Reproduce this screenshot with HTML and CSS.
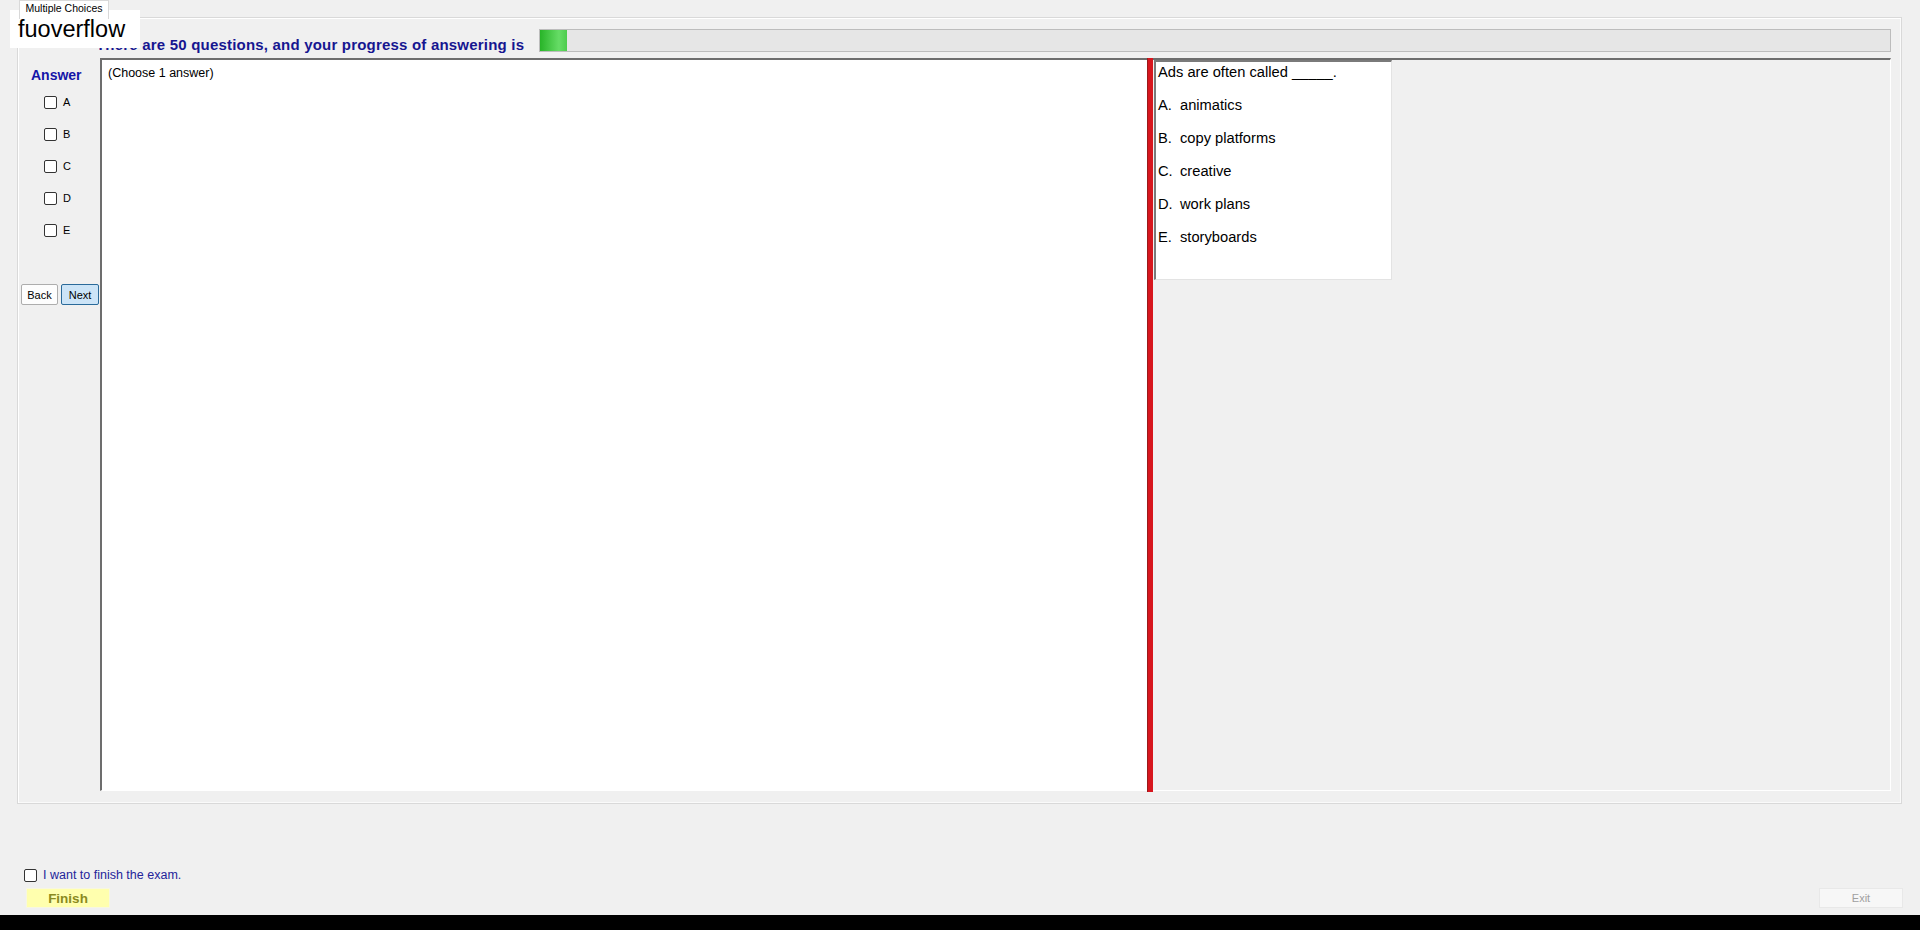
FILE: index.html
```html
<!DOCTYPE html>
<html lang="en">
<head>
  <meta charset="UTF-8">
  <title>Multiple Choices</title>
  <link rel="stylesheet" href="styles.css">
</head>
<body>
  <div class="window">
    <!-- Tab header -->
    <div class="tabs">
      <div class="tab">Multiple Choices</div>
    </div>

    <!-- Tab page: progress + answer column + question viewer -->
    <div class="tab-page">
      <div class="progress-row">
        <span class="progress-label">There are 50 questions, and your progress of answering is</span>
        <div class="progress-bar">
          <div class="progress-fill" style="width: 2%;"></div>
        </div>
      </div>

      <div class="answer-col">
        <div class="answer-title">Answer</div>
        <label class="choice"><input type="checkbox"> A</label>
        <label class="choice"><input type="checkbox"> B</label>
        <label class="choice"><input type="checkbox"> C</label>
        <label class="choice"><input type="checkbox"> D</label>
        <label class="choice"><input type="checkbox"> E</label>
        <div class="nav-buttons">
          <button class="btn">Back</button>
          <button class="btn btn-default">Next</button>
        </div>
      </div>

      <div class="viewer">
        <div class="viewer-text">(Choose 1 answer)</div>
        <div class="splitter"></div>
        <div class="viewer-side">
          <div class="question-box">
            <div class="question">Ads are often called _____.</div>
            <div class="option"><span class="letter">A.</span>animatics</div>
            <div class="option"><span class="letter">B.</span>copy platforms</div>
            <div class="option"><span class="letter">C.</span>creative</div>
            <div class="option"><span class="letter">D.</span>work plans</div>
            <div class="option"><span class="letter">E.</span>storyboards</div>
          </div>
        </div>
      </div>
    </div>

    <!-- Footer: finish exam -->
    <div class="footer">
      <div class="finish-group">
        <label class="finish-check"><input type="checkbox"> I want to finish the exam.</label>
        <button class="btn-finish">Finish</button>
      </div>
      <button class="btn-exit" disabled>Exit</button>
    </div>

    <div class="watermark">fuoverflow</div>
  </div>
  <div class="taskbar"></div>
</body>
</html>
```

FILE: styles.css
```css
body {
  margin: 0;
  background-color: #000;
  font-family: "Liberation Sans", Arial, sans-serif;
  overflow: hidden;
}
.window {
  position: relative;
  height: 915px;
  background-color: #f0f0f0;
}
.taskbar {
  height: 15px;
  background-color: #000;
}
.watermark {
  position: absolute;
  top: 10px;
  left: 10px;
  width: 122px;
  height: 38px;
  padding-left: 8px;
  background-color: #fff;
  font-size: 23.5px;
  line-height: 38px;
  color: #000;
}

/* tabs */
.tabs {
  height: 17px;
  padding-left: 19px;
  display: flex;
}
.tab {
  width: 88px;
  height: 18px;
  border: 1px solid #d9d9d9;
  border-bottom: none;
  background-color: #fff;
  font-size: 10.5px;
  line-height: 14px;
  text-align: center;
  color: #000;
  position: relative;
  z-index: 1;
}
.tab-page {
  margin-left: 17px;
  width: 1885px;
  height: 787px;
  box-sizing: border-box;
  border: 1px solid #d9d9d9;
  box-shadow: inset 1px 1px 0 #fff, inset -1px -1px 0 #fafafa;
  padding: 11px 10px 12px 0;
  display: grid;
  grid-template-columns: 82px 1fr;
  grid-template-rows: 23px 1fr;
  row-gap: 6px;
}

/* progress */
.progress-row {
  grid-column: 1 / 3;
  display: flex;
  padding-left: 78px;
}
.progress-label {
  font-size: 15px;
  font-weight: bold;
  letter-spacing: 0.2px;
  color: #161690;
  line-height: 23px;
  padding-top: 4px;
  margin-right: 15px;
  white-space: nowrap;
}
.progress-bar {
  flex: 1;
  border: 1px solid #bcbcbc;
  background-color: #e6e6e6;
  display: flex;
}
.progress-fill {
  background: linear-gradient(to right, #28b428, #66dc66 70%, #4ccc4c);
}

/* answer column */
.answer-col {
  display: flex;
  flex-direction: column;
}
.answer-title {
  margin-top: 9px;
  margin-left: 13px;
  font-size: 14px;
  font-weight: bold;
  line-height: 16px;
  color: #1515a8;
}
.choice {
  height: 32px;
  display: flex;
  align-items: center;
  padding-left: 26px;
  font-size: 11px;
  color: #000;
}
.answer-title + .choice {
  margin-top: 3px;
}
input[type="checkbox"] {
  appearance: none;
  width: 13px;
  height: 13px;
  margin: 0 6px 0 0;
  border: 1px solid #333;
  border-radius: 2px;
  background-color: #fff;
  box-sizing: border-box;
}
.nav-buttons {
  margin-top: 38px;
  padding-left: 3px;
  display: flex;
  gap: 3px;
}
.btn {
  width: 37px;
  height: 21px;
  padding: 0;
  border: 1px solid #adadad;
  border-radius: 2px;
  background-color: #fdfdfd;
  font-family: "Liberation Sans", Arial, sans-serif;
  font-size: 11px;
  color: #000;
}
.btn-default {
  width: 38px;
  background-color: #cce4f7;
  border-color: #2a6a9a;
}

/* question viewer */
.viewer {
  display: flex;
  border-top: 2px solid #6d6d6d;
  border-left: 2px solid #6d6d6d;
  border-right: 1px solid #fff;
  border-bottom: 1px solid #fff;
}
.viewer-text {
  flex: 0 0 1039px;
  background-color: #fff;
  padding: 5px 0 0 6px;
  font-size: 12.5px;
  line-height: 16px;
  color: #000;
}
.splitter {
  flex: 0 0 6px;
  margin: -2px 0 -2px 0;
  background-color: #d7161e;
  border-left: 1px solid #9a1a1a;
  box-sizing: border-box;
}
.viewer-side {
  flex: 1;
  background-color: #f0f0f0;
  padding-left: 1px;
}
.question-box {
  width: 238px;
  height: 220px;
  box-sizing: border-box;
  border-top: 2px solid #7a7a7a;
  border-left: 2px solid #7a7a7a;
  border-right: 1px solid #e3e3e3;
  border-bottom: 1px solid #e3e3e3;
  background-color: #fff;
  padding-left: 2px;
  font-size: 14.7px;
  color: #000;
}
.question {
  line-height: 20px;
}
.option {
  margin-top: 13px;
  line-height: 20px;
  display: flex;
}
.letter {
  width: 22px;
}

/* footer */
.footer {
  height: 111px;
  box-sizing: border-box;
  padding: 0 17px 7px 24px;
  display: flex;
  justify-content: space-between;
  align-items: flex-end;
}
.finish-group {
  display: flex;
  flex-direction: column;
}
.finish-check {
  display: flex;
  align-items: center;
  font-size: 12.5px;
  color: #24249a;
}
.btn-finish {
  margin-top: 6px;
  margin-left: 2px;
  width: 84px;
  height: 20px;
  padding: 0;
  border: 1px solid #f7f7e0;
  background-color: #ffffae;
  font-family: "Liberation Sans", Arial, sans-serif;
  font-size: 13.5px;
  font-weight: bold;
  color: #8a8a1e;
}
.btn-exit {
  width: 84px;
  height: 20px;
  padding: 0;
  border: 1px solid #e8e8e8;
  background-color: #f7f7f7;
  font-family: "Liberation Sans", Arial, sans-serif;
  font-size: 11px;
  color: #a0a0a0;
}
```
